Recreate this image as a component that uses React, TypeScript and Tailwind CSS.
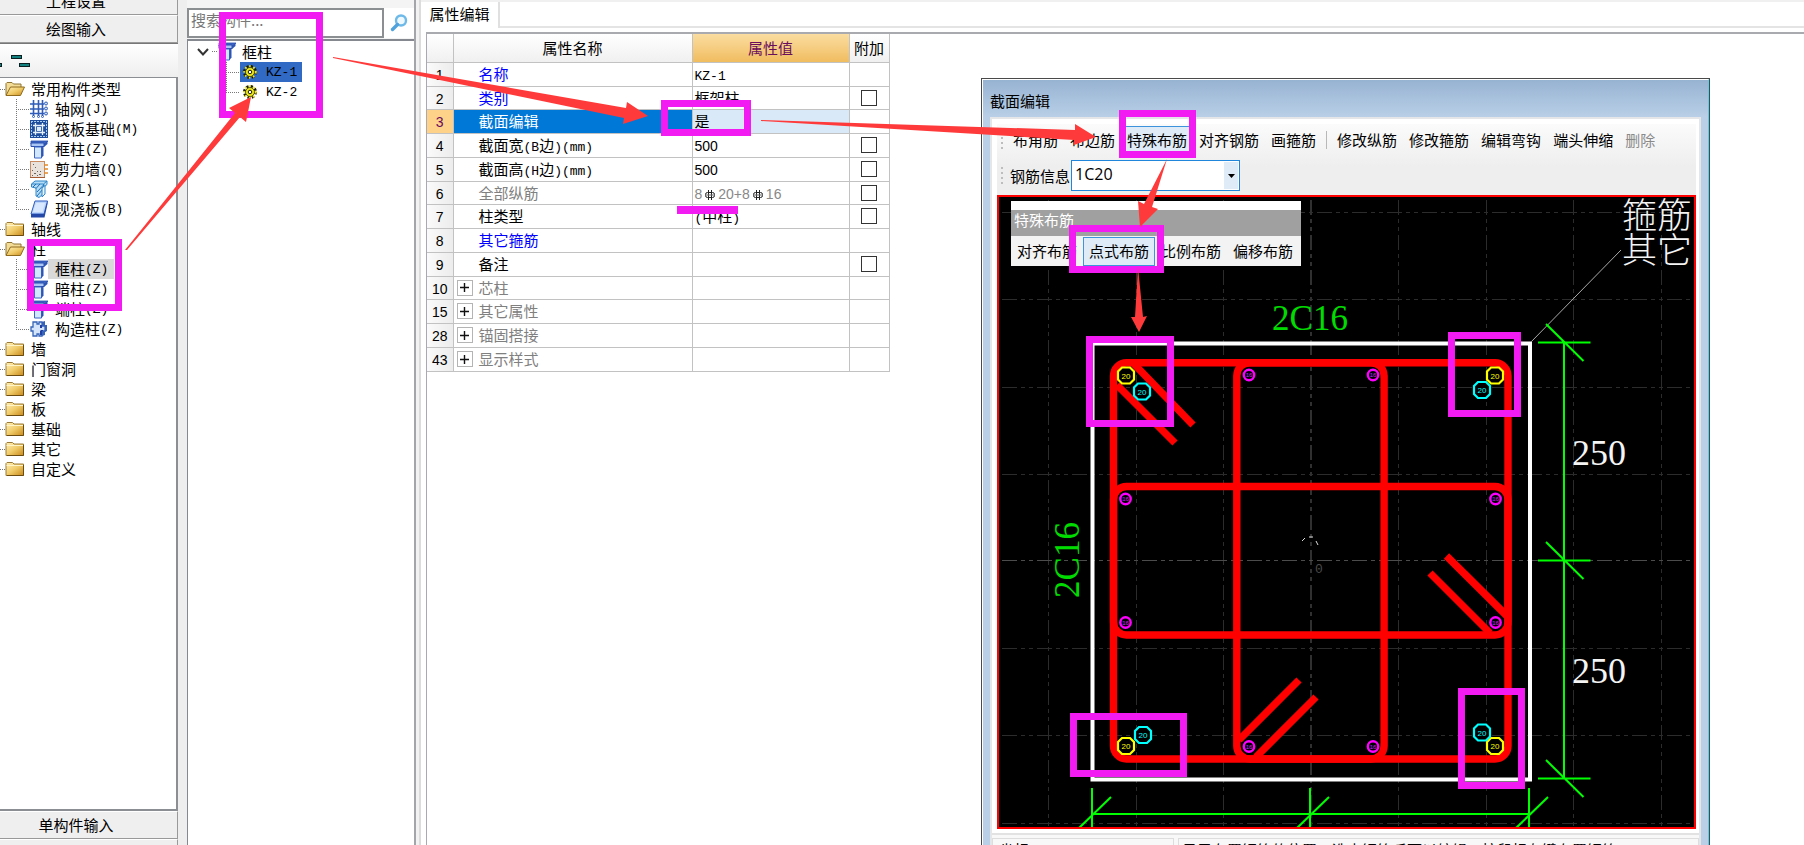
import type { ReactNode } from 'react'
import clsx from 'clsx'

// ---------- tree icons ----------

const FolderIcon = ({ open }: { open?: boolean }) => (
  <svg width="20" height="16" viewBox="0 0 20 16" className="shrink-0">
    <defs>
      <linearGradient id="folder" x1="0" y1="0" x2="1" y2="1">
        <stop offset="0" stopColor="#fff0b8" />
        <stop offset="0.5" stopColor="#f0cc6a" />
        <stop offset="1" stopColor="#c98a1c" />
      </linearGradient>
    </defs>
    {open ? (
      <>
        <path d="M1 14V2.500L2 1.500H7L8.500 3H16V7" fill="#f3dc95" stroke="#8f7434" />
        <path d="M1 14.500L5.500 6H19.500L15.500 14.500Z" fill="url(#folder)" stroke="#8f6a1c" />
      </>
    ) : (
      <>
        <path d="M1 14.500V2.500L2 1.500H7.500L9 3H18.500V14.500Z" fill="url(#folder)" stroke="#9a7a34" />
        <path d="M1.500 4.500H18" stroke="#fff3c8" />
        <path d="M18.500 4V14.500H2" fill="none" stroke="#6e4e10" />
      </>
    )}
  </svg>
)

const ColumnIcon = () => (
  <svg width="18" height="19" viewBox="0 0 18 19" className="shrink-0">
    <path d="M1 1H18L15 4H1Z" fill="#3f66c4" stroke="#2a4fae" strokeWidth="0.8" />
    <path d="M1 3H14V6.500H1Z" fill="#a9c6f4" stroke="#2a4fae" />
    <path d="M14 7V4L17.500 1V4Z" fill="#2e55b4" />
    <path d="M4.500 7H11.500V18H4.500Z" fill="#d3e7fc" stroke="#3f66c4" />
    <path d="M11.500 7H13.500V15.500L11.500 18Z" fill="#2e55b4" />
  </svg>
)

const AxisIcon = () => (
  <svg width="18" height="18" viewBox="0 0 18 18" className="shrink-0" fill="none" stroke="#2f5cb8">
    <path d="M3.500 0V16M8.500 0V16M12.500 0V16M0 4H14M0 9H14M0 13.500H14" strokeWidth="1.600" />
    <circle cx="16" cy="3.500" r="1.500" fill="#cfe0ff" />
    <circle cx="16" cy="8.500" r="1.500" fill="#cfe0ff" />
    <circle cx="16" cy="13.500" r="1.500" fill="#cfe0ff" />
    <circle cx="3.500" cy="16.500" r="1" />
    <circle cx="8.500" cy="16.500" r="1" />
    <circle cx="12.500" cy="16.500" r="1" />
  </svg>
)

const RaftIcon = () => (
  <svg width="18" height="18" viewBox="0 0 18 18" className="shrink-0">
    <rect width="18" height="18" fill="#1f4f9c" />
    <path d="M1.500 1V17M16.500 1V17M1 1.500H17M1 16.500H17" stroke="#a8cbf0" strokeDasharray="2 1" />
    <path d="M5.500 3V15M12.500 3V15M3 5.500H15M3 12.500H15" stroke="#e6f1fc" strokeWidth="1.300" />
    <rect x="7" y="7" width="4" height="4" fill="#dcecfb" />
  </svg>
)

const ShearWallIcon = () => (
  <svg width="18" height="17" viewBox="0 0 18 17" className="shrink-0">
    <rect x="0.500" y="0.500" width="14" height="16" fill="#e9e2dc" stroke="#c98c62" />
    <path d="M0 16.500H15" stroke="#a65a32" />
    <path d="M14 4H18M14 8H18M14 12H18" stroke="#e08a2c" strokeWidth="1.500" />
    <g fill="#6b625c">
      <rect x="3" y="3" width="1" height="1" />
      <rect x="5" y="6" width="1" height="1" />
      <rect x="2" y="9" width="1" height="1" />
      <rect x="7" y="10" width="1" height="1" />
      <rect x="4" y="12" width="2" height="1" />
      <rect x="9" y="13" width="2" height="1" />
      <rect x="10" y="10" width="1" height="1" />
      <rect x="2" y="14" width="1" height="1" />
      <rect x="7" y="14" width="1" height="1" />
    </g>
  </svg>
)

const BeamIcon = () => (
  <svg width="18" height="18" viewBox="0 0 18 18" className="shrink-0" stroke="#2f86c8">
    <path d="M1.500 4L5 1H17V4.500L14 7V13L9 17.500L6 16V8L1.500 7Z" fill="#b5dcf6" />
    <path d="M1.500 4H13.500L17 1M13.500 4V7" fill="none" />
    <path d="M3 7L6 4M6 8.500L10 4M7 12L14 4.500M7 16L13 9" stroke="#1f6fb4" />
    <path d="M12 8L15 5.500V14L12 17Z" fill="#e6f4fd" />
  </svg>
)

const SlabIcon = () => (
  <svg width="18" height="18" viewBox="0 0 18 18" className="shrink-0">
    <path d="M5 1H17.500L14 14H1Z" fill="#bcd6fb" stroke="#2f5cc0" />
    <path d="M1 14H14L17.500 1V4L14.500 17.500H1Z" fill="#2348a8" />
    <path d="M6 3H15L12.500 12H3Z" fill="#d8e8fe" />
  </svg>
)

const TieColumnIcon = () => (
  <svg width="18" height="18" viewBox="0 0 18 18" className="shrink-0">
    <path d="M3 2H7V4H9V2H12V6H15V11H12V16H9V14H7V16H3V11H1V7H3Z" fill="#d3e4fb" stroke="#3763b8" strokeWidth="1.300" />
    <path d="M10 5H12V8H10ZM11 10H13V12L12 15H10V11Z" fill="#1f3fa4" />
    <path d="M12 2L15 1V5L17 5V11L15 12V15L12 16V11H15V6H12Z" fill="#3763b8" />
  </svg>
)

const GearIcon = () => (
  <svg width="14" height="14" viewBox="0 0 14 14" className="shrink-0">
    <circle cx="7" cy="7" r="5.500" fill="none" stroke="#1c1c00" strokeWidth="3" strokeDasharray="2.300 2" />
    <circle cx="7" cy="7" r="4.500" fill="#f0ea1c" stroke="#3a3800" strokeWidth="0.800" />
    <circle cx="7" cy="7" r="5.800" fill="none" stroke="#f0ea1c" strokeWidth="1.800" strokeDasharray="1.500 2.800" />
    <circle cx="7" cy="7" r="1.800" fill="#fff" stroke="#1c1c00" />
  </svg>
)

const SearchIcon = () => (
  <svg width="18" height="18" viewBox="0 0 18 18">
    <circle cx="11" cy="6.500" r="5" fill="#eef8ff" stroke="#6db9e8" strokeWidth="2.400" />
    <path d="M7.500 10.500L2.500 15.500" stroke="#4fa2dc" strokeWidth="3.400" strokeLinecap="round" />
  </svg>
)

// dotted connector in front of a child node
const Branch = ({ last }: { last?: boolean }) => (
  <svg width="14" height="20" viewBox="0 0 14 20" className="shrink-0" stroke="#777" strokeDasharray="1 1">
    <path d={last ? 'M0.500 0V10' : 'M0.500 0V20'} />
    <path d="M0 10.500H14" />
  </svg>
)

// ---------- data ----------

type Leaf = { name: string; key: string; Icon: () => ReactNode; selected?: boolean }
type Group = { name: string; children?: Leaf[] }

const groups: Group[] = [
  {
    name: '常用构件类型',
    children: [
      { name: '轴网', key: '(J)', Icon: AxisIcon },
      { name: '筏板基础', key: '(M)', Icon: RaftIcon },
      { name: '框柱', key: '(Z)', Icon: ColumnIcon },
      { name: '剪力墙', key: '(Q)', Icon: ShearWallIcon },
      { name: '梁', key: '(L)', Icon: BeamIcon },
      { name: '现浇板', key: '(B)', Icon: SlabIcon },
    ],
  },
  { name: '轴线' },
  {
    name: '柱',
    children: [
      { name: '框柱', key: '(Z)', Icon: ColumnIcon, selected: true },
      { name: '暗柱', key: '(Z)', Icon: ColumnIcon },
      { name: '端柱', key: '(Z)', Icon: ColumnIcon },
      { name: '构造柱', key: '(Z)', Icon: TieColumnIcon },
    ],
  },
  { name: '墙' },
  { name: '门窗洞' },
  { name: '梁' },
  { name: '板' },
  { name: '基础' },
  { name: '其它' },
  { name: '自定义' },
]

const Mono = ({ children }: { children: ReactNode }) => (
  <span className="font-['Liberation_Mono',monospace] text-[13px] leading-none">{children}</span>
)

const Num = ({ children }: { children: ReactNode }) => (
  <span className="font-['Liberation_Sans',sans-serif] text-[14px] leading-none">{children}</span>
)

// rebar grade mark
const RebarMark = () => (
  <svg width="12" height="12" viewBox="0 0 12 12" className="mx-[2px] inline-block align-[-2px]" fill="none" stroke="#222">
    <rect x="1.500" y="3.500" width="9" height="5" rx="2" />
    <path d="M4.500 1V11M7.500 1V11" />
    <path d="M1 6H11" stroke="#666" />
  </svg>
)

type Prop = {
  id: number
  name: ReactNode
  value?: ReactNode
  check?: boolean
  tone?: 'blue' | 'gray'
  expand?: boolean
  active?: boolean
}

const props: Prop[] = [
  { id: 1, name: '名称', value: <Mono>KZ-1</Mono>, tone: 'blue' },
  { id: 2, name: '类别', value: '框架柱', tone: 'blue', check: true },
  { id: 3, name: '截面编辑', value: '是', active: true },
  { id: 4, name: <>截面宽<Mono>(B</Mono>边<Mono>)(mm)</Mono></>, value: <Num>500</Num>, check: true },
  { id: 5, name: <>截面高<Mono>(H</Mono>边<Mono>)(mm)</Mono></>, value: <Num>500</Num>, check: true },
  {
    id: 6,
    name: '全部纵筋',
    value: <span className="text-[#888]"><Num>8</Num><RebarMark /><Num>20+8</Num><RebarMark /><Num>16</Num></span>,
    tone: 'gray',
    check: true,
  },
  { id: 7, name: '柱类型', value: <><Mono>(</Mono>中柱<Mono>)</Mono></>, check: true },
  { id: 8, name: '其它箍筋', tone: 'blue' },
  { id: 9, name: '备注', check: true },
  { id: 10, name: '芯柱', tone: 'gray', expand: true },
  { id: 15, name: '其它属性', tone: 'gray', expand: true },
  { id: 28, name: '锚固搭接', tone: 'gray', expand: true },
  { id: 43, name: '显示样式', tone: 'gray', expand: true },
]

// ---------- left: navigation ----------

const NavButton = ({ children }: { children: ReactNode }) => (
  <button className="h-7 shrink-0 border-t border-r border-b border-t-white border-r-[#999] border-b-[#999] bg-[#efefef] pr-[25px] text-center">
    {children}
  </button>
)

const NavPanel = () => (
  <aside className="flex w-[178px] shrink-0 flex-col overflow-hidden bg-[#efefef]">
    <div className="-mt-[13px] flex flex-col">
      <NavButton>工程设置</NavButton>
      <NavButton>绘图输入</NavButton>
    </div>
    <div className="h-[34px] shrink-0 border-t border-[#777] bg-linear-to-b from-white to-[#eeeeee]">
      <svg width="32" height="32" viewBox="0 44 32 32" fill="#138080" stroke="#0a2020">
        <rect x="11.500" y="55.500" width="10" height="3" />
        <rect x="19.500" y="63.500" width="10" height="3" />
        <rect x="-4.500" y="63.500" width="6" height="3" />
      </svg>
    </div>
    <nav className="flex-1 overflow-hidden border-t border-r-2 border-b-2 border-[#8b8f94] bg-white pt-px">
      <ul>
        {groups.map((g) => (
          <li key={g.name}>
            <div className="flex h-5 items-center">
              <span className="w-[5px] border-t border-dotted border-[#777]" />
              <FolderIcon open={!!g.children} />
              <span className="pl-[6px]">{g.name}</span>
            </div>
            {g.children && (
              <ul>
                {g.children.map((c, i) => (
                  <li key={c.name} className="flex h-5 items-center pl-4">
                    <Branch last={i === g.children!.length - 1} />
                    <c.Icon />
                    <a href="#" className={clsx('flex h-5 items-center pr-[6px] pl-[7px]', c.selected && 'bg-[#d9d9d9]')}>
                      {c.name}
                      <Mono>{c.key}</Mono>
                    </a>
                  </li>
                ))}
              </ul>
            )}
          </li>
        ))}
      </ul>
    </nav>
    <NavButton>单构件输入</NavButton>
    <div className="h-[6px] overflow-hidden">
      <div className="flex flex-col">
        <NavButton>报表预览</NavButton>
      </div>
    </div>
  </aside>
)

// ---------- middle: component list ----------

const ComponentPanel = () => (
  <section className="flex w-[229px] shrink-0 flex-col border-r-2 border-[#a3a5a8] bg-[#f4f4f4] pt-2">
    <div className="flex h-[30px] bg-white">
      <input
        aria-label="搜索构件"
        placeholder="搜索构件..."
        className="w-[197px] border-2 border-[#8c8f92] bg-white pb-[6px] pl-[2px] text-[15px] outline-none placeholder:text-[#777]"
      />
      <button aria-label="搜索" className="flex flex-1 items-center justify-center">
        <SearchIcon />
      </button>
    </div>
    <div className="mt-px flex-1 border-t-2 border-l border-[#85898f] bg-white">
      <div className="flex h-[21px] items-center pl-[9px]">
        <svg width="12" height="12" viewBox="0 0 12 12" fill="none" stroke="#333" strokeWidth="2">
          <path d="M1 3L6 8.500L11 3" />
        </svg>
        <span className="mr-px ml-[3px] w-[5px] border-t border-dotted border-[#777]" />
        <ColumnIcon />
        <span className="pl-[6px]">框柱</span>
      </div>
      {['KZ-1', 'KZ-2'].map((k, i) => (
        <div key={k} className="flex h-5 items-center pl-[38px]">
          <Branch last={i === 1} />
          <a href="#" className={clsx('flex h-5 items-center gap-[9px] pr-[5px] pl-[3px]', i === 0 && 'bg-[#316ac5]')}>
            <GearIcon />
            <Mono>{k}</Mono>
          </a>
        </div>
      ))}
    </div>
  </section>
)

// ---------- property table ----------

const PropertyPanel = () => (
  <main className="flex min-w-0 flex-1 flex-col bg-white">
    <div className="flex h-7 border-t-2 border-[#f0f0f0]">
      <button className="w-[79px] border-r-2 border-[#e0e0e0] pb-[2px] text-center">属性编辑</button>
      <div className="flex-1 border-b-2 border-[#e4e4e4]" />
    </div>
    <div className="mt-1 ml-[5px] flex-1 border-t-2 border-l border-[#a8aab0]">
      <table className="w-[462px] table-fixed border-collapse">
        <colgroup>
          <col className="w-[26px]" />
          <col className="w-[239px]" />
          <col className="w-[157px]" />
          <col className="w-[40px]" />
        </colgroup>
        <thead>
          <tr className="h-7 bg-linear-to-b from-white to-[#f0f0f0]">
            <th className="border-r border-b border-[#c2c2c2]" />
            <th className="border-r border-b border-[#c2c2c2] p-0 font-normal">属性名称</th>
            <th className="border-r border-b border-[#c2c2c2] bg-linear-to-b from-[#fadda0] to-[#f0bc5e] p-0 font-normal text-[#6a0d5c]">属性值</th>
            <th className="border-r border-b border-[#c2c2c2] p-0 font-normal">附加</th>
          </tr>
        </thead>
        <tbody>
          {props.map((p) => (
            <tr key={p.id} className="h-6 nth-[4n+2]:h-[23px]">
              <td
                className={clsx(
                  'border border-l-0 border-[#c2c2c2] p-0 text-center leading-5',
                  p.active ? 'bg-[#ffd28a] text-[#6a0d5c]' : 'bg-linear-to-r from-[#fafafa] to-[#ececec]',
                )}
              >
                <Num>{p.id}</Num>
              </td>
              <td
                className={clsx(
                  'border border-[#c2c2c2] p-0 leading-5',
                  p.active && 'bg-[#0078d7] text-white',
                  p.tone === 'blue' && 'text-[#0000ff]',
                  p.tone === 'gray' && 'text-[#808080]',
                )}
              >
                <div className="flex items-center pl-[3px]">
                  {p.expand ? (
                    <button aria-label="展开" className="flex size-4 items-center justify-center border border-[#b4b4b4] bg-white">
                      <svg width="9" height="9" viewBox="0 0 9 9" stroke="#111" strokeWidth="1.400">
                        <path d="M0 4.500H9M4.500 0V9" />
                      </svg>
                    </button>
                  ) : (
                    <span className="w-4" />
                  )}
                  <span className="pl-[6px]">{p.name}</span>
                </div>
              </td>
              <td className={clsx('border border-[#c2c2c2] p-0 pl-[2px] leading-5', p.active && 'bg-[#d9e9f7]')}>{p.value}</td>
              <td className="border border-[#c2c2c2] p-0 leading-5">
                {p.check && (
                  <input type="checkbox" aria-label={`附加 ${p.id}`} className="mx-auto block size-4 appearance-none border border-[#333] bg-white" />
                )}
              </td>
            </tr>
          ))}
        </tbody>
      </table>
    </div>
  </main>
)

// ---------- section drawing ----------

const gridX = [1048, 1136, 1223, 1398, 1486, 1573, 1661]
const gridY = [212, 299, 387, 474, 648, 735, 823]

const smallBars = [
  [1249, 375], [1373, 375], [1125.5, 499], [1495.5, 499],
  [1125.5, 622.5], [1495.5, 622.5], [1249, 746.5], [1373, 746.5],
]
const cornerBars = [[1126, 375.5], [1495, 375.5], [1126, 746], [1495, 746]]
const pointBars = [[1142, 391.5], [1482, 390], [1143, 735], [1482, 732.5]]

const BigBar = ({ x, y, color }: { x: number; y: number; color: string }) => (
  <g>
    <path
      d={`M${x - 4} ${y - 8}h8l4 4v8l-4 4h-8l-4 -4v-8z`}
      fill="#000"
      stroke={color}
      strokeWidth="2.200"
    />
    <text x={x} y={y + 3} fill={color} fontSize="8" textAnchor="middle" fontFamily="Liberation Sans">20</text>
  </g>
)

const SectionCanvas = () => (
  <svg viewBox="997 195 699 634" className="block h-auto w-full" fill="none">
    <rect x="997" y="195" width="699" height="634" fill="#000" />
    <g stroke="#2c2c2c" strokeWidth="1" strokeDasharray="15 4 4 4 4 4">
      {gridX.map((x) => <path key={x} d={`M${x}.5 200V826`} />)}
      {gridY.map((y) => <path key={y} d={`M1002 ${y}.5H1690`} />)}
    </g>
    <g stroke="#4c4c4c" strokeDasharray="15 4 4 4 4 4">
      <path d="M1311 200V826" strokeWidth="2" stroke="#303030" />
      <path d="M1002 560.500H1690" />
    </g>
    <text x="1315" y="573" fill="#4a4a4a" fontSize="13" fontFamily="Liberation Mono">0</text>
    <path d="M1302 541L1305 538M1309 537H1313M1316 541L1318 545" stroke="#ddd" />

    <rect x="1092.500" y="343.500" width="437.500" height="436" stroke="#fff" strokeWidth="4" />
    <path d="M1531 342L1621 250" stroke="#aaa" />

    <g stroke="#f00" strokeWidth="7.400">
      <rect x="1113.500" y="362.700" width="394.500" height="396.300" rx="13" />
      <rect x="1236.800" y="362.700" width="147.300" height="396.300" rx="13" />
      <rect x="1113.500" y="486.500" width="394.500" height="148.500" rx="13" />
      <path d="M1134 364L1193 425M1117 385L1175 443" />
      <path d="M1446.500 556L1507 616M1430 573L1490 633" />
      <path d="M1299 680L1239 740M1316 697L1256 757" />
    </g>

    {smallBars.map(([x, y]) => (
      <g key={`${x}-${y}`}>
        <circle cx={x} cy={y} r="5.200" fill="#000" stroke="#f0f" strokeWidth="2.400" />
        <text x={x} y={y + 2} fill="#d020ff" fontSize="6" textAnchor="middle" fontFamily="Liberation Sans">16</text>
      </g>
    ))}
    {cornerBars.map(([x, y]) => <BigBar key={`${x}-${y}`} x={x} y={y} color="#ffff00" />)}
    {pointBars.map(([x, y]) => <BigBar key={`${x}-${y}`} x={x} y={y} color="#00ffff" />)}

    {/* dimensions */}
    <g stroke="#0f0" strokeWidth="2">
      <path d="M1564 342V779" />
      {[342, 560, 778].map((y) => <path key={y} d={`M1538 ${y}.500H1590.500M1546 ${y - 18}L1583.500 ${y + 19}`} />)}
      <path d="M1092 814H1529" />
      {[1092, 1310, 1529].map((x) => <path key={x} d={`M${x} 788V828M${x - 13} 828L${x + 19} 797`} />)}
    </g>

    <g fontFamily="Liberation Serif" fontSize="35" fill="#00dc00" textAnchor="middle">
      <text x="1310" y="330">2C16</text>
      <text x="1079" y="560" transform="rotate(-90 1079 560)">2C16</text>
    </g>
    <g fontFamily="Liberation Serif" fontSize="36" fill="#f4f4f4">
      <text x="1572" y="465">250</text>
      <text x="1572" y="683">250</text>
    </g>
    <g fontFamily="'Noto Sans CJK SC', sans-serif" fontSize="35" fontWeight="200" fill="#f4f4f4">
      <text x="1622" y="228">箍筋</text>
      <text x="1622" y="263">其它</text>
    </g>
    <rect x="998" y="196" width="697" height="632" stroke="#f00" strokeWidth="2" />
  </svg>
)

const Grip = () => (
  <span className="mr-[3px] flex w-[5px] flex-col items-center gap-[3px]">
    {[0, 1, 2, 3].map((i) => <i key={i} className="size-[2px] bg-[#bdbdbd]" />)}
  </span>
)

const ToolButton = ({ children, active, disabled }: { children: ReactNode; active?: boolean; disabled?: boolean }) => (
  <button
    disabled={disabled}
    className={clsx(
      'h-[29px] shrink-0 border px-[5px] whitespace-nowrap',
      active ? 'border-[#3d94dc] bg-[#dfebf6]' : 'border-transparent',
      disabled && 'text-[#8a8a8a]',
    )}
  >
    {children}
  </button>
)

const SectionDialog = () => (
  <div role="dialog" aria-label="截面编辑" className="absolute top-[78px] left-[981px] w-[729px] border border-[#4a4a4a]">
    <div className="border border-t-white border-r-[#4fd0f0] border-l-white bg-[#b9cfe7] px-[7px]">
      <div className="-mx-[7px] flex h-[37px] items-center bg-linear-to-b from-[#97b3d2] to-[#b9cfe7] px-[7px] pt-1">截面编辑</div>
      <div className="border-2 border-[#e4e6e8] bg-white pt-[5px] pr-[3px] pl-[5px]">
        <div className="bg-linear-to-b from-[#fbfbfb] to-[#eeeeee] to-60% pb-px pl-[2px]">
          <div className="flex h-[34px] items-center pb-[2px]">
            <Grip />
            <ToolButton>布角筋</ToolButton>
            <ToolButton>布边筋</ToolButton>
            <ToolButton active>特殊布筋</ToolButton>
            <ToolButton>对齐钢筋</ToolButton>
            <ToolButton>画箍筋</ToolButton>
            <span className="mx-1 h-[18px] w-px bg-[#b8b8b8]" />
            <ToolButton>修改纵筋</ToolButton>
            <ToolButton>修改箍筋</ToolButton>
            <ToolButton>编辑弯钩</ToolButton>
            <ToolButton>端头伸缩</ToolButton>
            <ToolButton disabled>删除</ToolButton>
          </div>
          <div className="flex h-9 items-center pb-px">
            <Grip />
            <label htmlFor="rebar" className="pr-px pl-[3px]">钢筋信息</label>
            <div className="relative">
              <select
                id="rebar"
                className="h-[31px] w-[169px] appearance-none border border-[#1f86dc] bg-white pb-[3px] pl-[3px] font-['Open_Sans',sans-serif] text-[16px] outline-none"
              >
                <option>1C20</option>
              </select>
              <span className="pointer-events-none absolute top-[2px] right-[2px] flex h-[27px] w-[14px] items-center justify-center bg-[#dfebf6]">
                <svg width="7" height="4" viewBox="0 0 7 4"><path d="M0 0H7L3.500 4Z" fill="#000" /></svg>
              </span>
            </div>
          </div>
        </div>
        <div className="relative">
          <SectionCanvas />
          <div className="absolute top-[6px] left-[14px] w-[290px] bg-[#f3f3f3] pt-[9px] shadow-[inset_0_9px_0_#fff]">
            <div className="h-[26px] bg-[#a0a0a0] pl-[3px] leading-5 text-white">特殊布筋</div>
            <div className="flex h-[30px] items-center">
              <ToolButton>对齐布筋</ToolButton>
              <ToolButton active>点式布筋</ToolButton>
              <ToolButton>比例布筋</ToolButton>
              <ToolButton>偏移布筋</ToolButton>
            </div>
          </div>
        </div>
        <div className="mt-1 -mr-[3px] -ml-[5px] flex gap-1 border-t-2 border-[#e2e2e2] bg-[#f8f8f8] pt-[3px]">
          <div className="h-7 w-[182px] border border-[#ddd] pt-px pl-[6px]">坐标</div>
          <div className="h-7 flex-1 overflow-hidden border border-[#ddd] pt-px pl-[3px] whitespace-nowrap">显示布置钢筋的位置，选中钢筋后可以编辑，按鼠标左键布置钢筋</div>
        </div>
      </div>
    </div>
  </div>
)

// ---------- tutorial marks ----------

// x, y, width, height of the outer edge
const boxes = [
  [219, 12, 104, 106],
  [27, 239, 95, 72],
  [661, 100, 90, 36],
  [1119, 110, 77, 48],
  [1069, 225, 95, 48],
  [1086, 336, 88, 91],
  [1448, 332, 73, 85],
  [1070, 713, 117, 64],
  [1458, 688, 67, 101],
]

const arrows = [
  '125,250 235,113 229,108 251,97 246,122 240,117 127,250',
  '333,57 626,108 627,102 648,116 623,124 624,118 333,58',
  '761,120 1075,130 1075,124 1096,137 1074,145 1074,140 761,121',
  '1167,159 1152,207 1158,209 1140,227 1138,201 1144,204',
  '1138,267 1143,317 1147,316 1139,332 1131,317 1135,317',
]

const Marks = () => (
  <svg width="1804" height="845" viewBox="0 0 1804 845" className="pointer-events-none absolute top-0 left-0">
    <g fill="none" stroke="#f21cf2" strokeWidth="7">
      {boxes.map(([x, y, w, h]) => (
        <rect key={`${x}-${y}`} x={x + 3.5} y={y + 3.5} width={w - 7} height={h - 7} />
      ))}
    </g>
    <rect x="677" y="206" width="61" height="8" fill="#f21cf2" />
    <g fill="#ff3a3a">
      {arrows.map((p) => <polygon key={p} points={p} />)}
    </g>
  </svg>
)

export default function App() {
  return (
    <div className="relative flex h-screen overflow-hidden bg-white font-['Noto_Sans_CJK_SC',sans-serif] text-[15px] leading-5 text-black">
      <NavPanel />
      <div className="w-[9px] shrink-0 bg-[#eeeeee]" />
      <ComponentPanel />
      <div className="w-[5px] shrink-0 border-r-2 border-[#dcdcdc] bg-[#f2f2f2]" />
      <PropertyPanel />
      <SectionDialog />
      <Marks />
    </div>
  )
}
